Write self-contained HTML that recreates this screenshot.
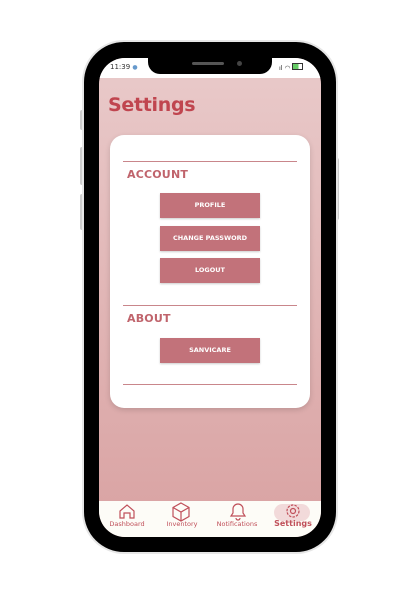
<!DOCTYPE html><html><head><style>
body{margin:0;width:420px;height:594px;background:#fff;position:relative;overflow:hidden;font-family:"DejaVu Sans","Liberation Sans",sans-serif}
.a{position:absolute}
.btn{position:absolute;left:160px;width:100px;height:25px;background:#c2727a;color:#fff;font-size:6.5px;font-weight:bold;text-align:center;line-height:25px;box-shadow:0 1px 2px rgba(0,0,0,.2)}
.ln{position:absolute;left:123px;width:174px;height:1px;background:#c9868b}
.h{position:absolute;left:127px;color:#c0646c;font-weight:bold;font-size:11px;letter-spacing:.2px}
.nl{position:absolute;top:520px;font-size:6.5px;color:#c0505a;text-align:center;width:60px}
</style></head><body>
<div class="a" style="left:80px;top:110px;width:4px;height:20px;background:#ccc;border-radius:2px"></div>
<div class="a" style="left:80px;top:147px;width:4px;height:38px;background:#ccc;border-radius:2px"></div>
<div class="a" style="left:80px;top:194px;width:4px;height:36px;background:#ccc;border-radius:2px"></div>
<div class="a" style="left:335px;top:158px;width:4px;height:62px;background:#ccc;border-radius:2px"></div>
<div class="a" style="left:84px;top:42px;width:252px;height:510px;background:#000;border-radius:40px;box-shadow:0 0 0 2px #e6e6e6"></div>
<div class="a" style="left:99px;top:58px;width:222px;height:479px;border-radius:26px;overflow:hidden;background:linear-gradient(#e9caca,#d9a2a2)">
 <div class="a" style="left:0;top:0;width:222px;height:20px;background:#fff"></div>
 <div class="a" style="left:11px;top:5px;font-size:7px;color:#333">11:39 <span style="color:#69c;font-size:6px">●</span></div>
 <div class="a" style="left:180px;top:5px;font-size:6.5px;color:#333">ıl ◠ <span style="display:inline-block;width:9px;height:5px;border:1px solid #333;background:linear-gradient(90deg,#6c6 60%,#fff 60%)"></span></div>
 <div class="a" style="left:49px;top:-4px;width:124px;height:20px;background:#000;border-radius:0 0 12px 12px"></div>
 <div class="a" style="left:93px;top:4px;width:32px;height:3px;background:#555;border-radius:2px"></div>
 <div class="a" style="left:138px;top:3px;width:5px;height:5px;background:#444;border-radius:50%"></div>
 <div class="a" style="left:9px;top:36px;font-size:19px;font-weight:bold;color:#c0454f;letter-spacing:-0.3px">Settings</div>
 <div class="a" style="left:0;top:443px;width:222px;height:36px;background:#fdfcf7"></div>
 <div class="a" style="left:175px;top:446px;width:36px;height:17px;background:#f2dada;border-radius:9px"></div>
 <svg class="a" style="left:0;top:443px" width="222" height="36" fill="none" stroke="#c0505a" stroke-width="1.2">
  <path d="M21 17 V10 L28 4 L35 10 V17 H31 V12 H25 V17 Z"/>
  <path d="M82 2 L90 6.5 V15.5 L82 20 L74 15.5 V6.5 Z M74 6.5 L82 11 L90 6.5 M82 11 V20"/>
  <path d="M132 15 H146 L144 12 V8 A5 5 0 0 0 134 8 V12 Z M137 17 A2 2 0 0 0 141 17"/>
  <circle cx="194" cy="10" r="2.5"/><circle cx="194" cy="10" r="6" stroke-dasharray="2.5 1.2"/>
 </svg>
</div>
<div class="nl" style="left:97px">Dashboard</div>
<div class="nl" style="left:152px">Inventory</div>
<div class="nl" style="left:207px">Notifications</div>
<div class="nl" style="left:263px;font-size:8px;top:519px;font-weight:bold">Settings</div>
<div class="a" style="left:110px;top:135px;width:200px;height:273px;background:#fff;border-radius:14px;box-shadow:0 2px 6px rgba(0,0,0,.15)"></div>
<div class="ln" style="top:161px"></div>
<div class="h" style="top:168px">ACCOUNT</div>
<div class="btn" style="top:193px">PROFILE</div>
<div class="btn" style="top:226px">CHANGE PASSWORD</div>
<div class="btn" style="top:258px">LOGOUT</div>
<div class="ln" style="top:305px"></div>
<div class="h" style="top:312px">ABOUT</div>
<div class="btn" style="top:338px">SANVICARE</div>
<div class="ln" style="top:384px"></div>
</body></html>
